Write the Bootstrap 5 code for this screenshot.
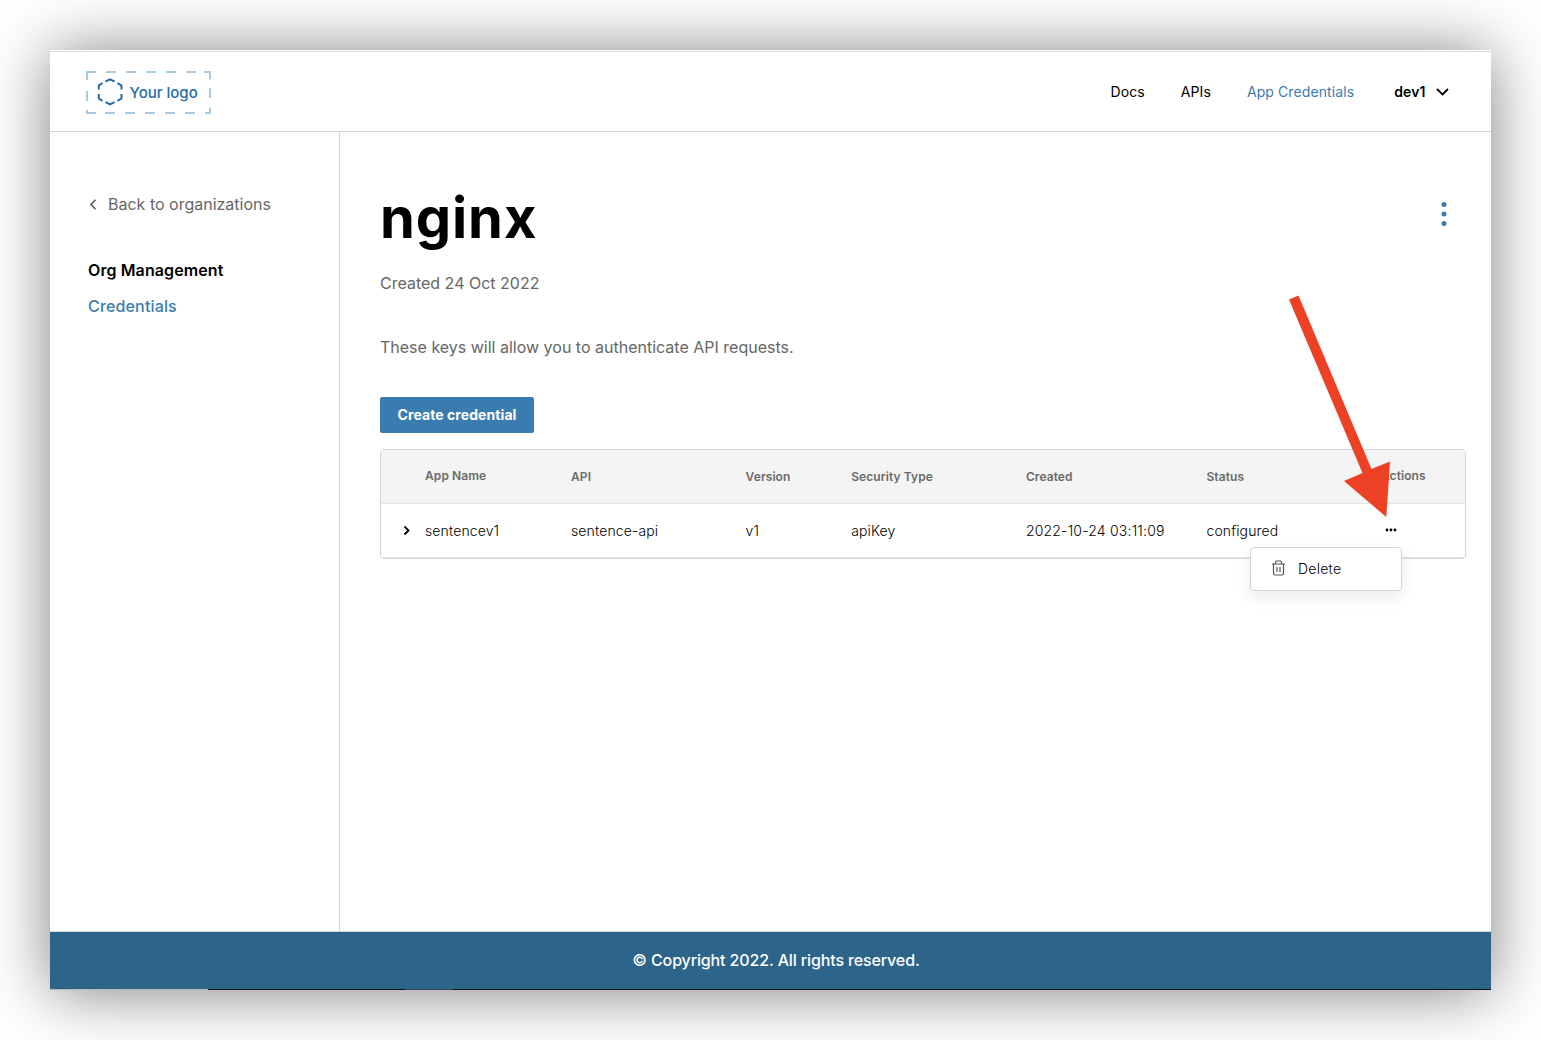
<!DOCTYPE html>
<html lang="en">
<head>
<meta charset="utf-8">
<meta name="viewport" content="width=device-width, initial-scale=1">
<title>nginx - App Credentials</title>
<link href="https://cdn.jsdelivr.net/npm/bootstrap@5.3.0/dist/css/bootstrap.min.css" rel="stylesheet">
<style>
body{font-family:Inter,"Liberation Sans",sans-serif;background:#fff;width:1541px;height:1040px;padding:50px;overflow:hidden;color:#000}
a{text-decoration:none}
svg{display:block;flex:none}
.app-window{width:1441px;height:940px;background:#fff;box-shadow:0 2px 60px rgba(0,0,0,.5);padding-top:1px}
.top-nav{height:81px;border-top:1px solid #dcdcdc;border-bottom:1px solid #d5d5d5;padding:0 41.500px 0 36px;font-size:14px;letter-spacing:.1px}
.top-nav .nav-link{padding:0;color:#000}
.top-nav .nav-link.active{color:#3a7cb0}
.top-links{gap:36px}
.user-caret{margin-left:9px}
.side{width:290px;border-right:1px solid #d5d5d5;padding:60px 0 0 38px;letter-spacing:.16px}
.back-link{color:#666;font-size:16px;font-weight:400;line-height:24px;gap:9px;letter-spacing:0}
.side-title{font-size:16px;font-weight:600;line-height:24px;margin-top:42px;letter-spacing:.1px}
.side-link{font-size:16px;font-weight:500;line-height:24px;color:#3a7cb0;margin-top:12px}
.content-pane{padding:52px 25px 0 40px}
.page-title{font-size:56px;font-weight:700;line-height:68px;margin:0;letter-spacing:.9px}
.grey-line{font-size:16px;font-weight:400;line-height:24px;color:#666;margin:19px 0 0}
.grey-line+.grey-line{margin-top:40px}
.btn-create{--bs-btn-bg:#3a7cb0;--bs-btn-color:#fff;--bs-btn-border-color:#3a7cb0;--bs-btn-border-radius:2px;--bs-btn-font-size:14px;--bs-btn-font-weight:700;--bs-btn-padding-x:0;--bs-btn-padding-y:0;width:154px;height:36px;margin:38px 0 16px;padding-bottom:2px;letter-spacing:.08px;display:block;white-space:nowrap}
.cred-box{border:1px solid #d5d5d5;border-radius:4px;height:110px}
.cred-table{table-layout:fixed;margin:0;border-collapse:separate;border-spacing:0;width:100%;font-size:14px;font-weight:350;color:#000;letter-spacing:.13px}
.cred-table>:not(caption)>*>*{padding:0;border:0;vertical-align:middle}
.cred-table>thead th{height:54px;background:#f4f4f4;color:#6a6a6a;font-size:12px;font-weight:600;border-bottom:1px solid #e4e4e4;letter-spacing:.08px}
.cred-table>thead th:first-child{border-top-left-radius:3px}
.cred-table>thead th:last-child{border-top-right-radius:3px}
.cred-table>tbody td{height:54px;border-bottom:1px solid #e6e6e6}
.cred-table>thead .lift{padding-bottom:2px}
.cred-table .c0{width:44px}.c1{width:146px}.c2{width:174.6px}.c3{width:105.6px}.c4{width:174.7px}.c5{width:180.6px}.c6{width:174.500px}
.row-dots{margin-left:3px}
.row-caret{margin-left:18px}
.stamp{letter-spacing:.2px}
.row-menu{display:block;position:absolute;left:869px;top:97px;width:152px;min-width:0;height:44px;padding:0;border:1px solid #d5d5d5;border-radius:4px;box-shadow:0 6px 16px rgba(40,50,70,.1)}
.row-menu .dropdown-item{padding:0 20px;height:40px;font-size:14px;font-weight:350;color:#000;gap:12px;letter-spacing:.25px}
.foot{height:58px;background:#2d648a;border-top:1px solid #d5d9dd;color:#fff;font-size:16px;font-weight:500;letter-spacing:-.13px;padding:0 0 2px 11px}
.edge-strip{height:1px;background:linear-gradient(90deg,#b4b8c4 158px,#081220 158px 355px,#3b4658 355px 403px,#081220 403px)}
.pointer{position:absolute;left:1280px;top:290px;z-index:1100}
</style>
</head>
<body>
<div class="app-window d-flex flex-column">
  <header class="top-nav d-flex align-items-center justify-content-between">
    <a href="#" aria-label="Your logo">
      <svg width="126" height="44" viewBox="0 0 126 44" fill="none">
        <g stroke="#a9cbe0" stroke-width="2"><path d="M1 10V2h9M20 2h10M40 2h10M60 2h10M80 2h10M100 2h10M118 2h6v7.500M1 21v10M124 18v10M1 40v4M0 43h10M19 43h10M39 43h10M59 43h10M79 43h10M99 43h10M119 43h6M124 44v-6"/></g>
        <g stroke="#2468a5" stroke-width="2"><path d="M19.500 11.500 24 9.300l4.500 2.200M31.500 13.200l4 2.300v4M35.500 24v4.500l-4 2.300M28.500 32.200 24 34.500l-4.500-2.300M16.500 30.800l-3.700-2.300V24M12.800 19.500v-4l3.700-2.300"/></g>
        <text x="43.500" y="28" fill="#246ba8" font-family="Inter" font-size="15" font-weight="500" letter-spacing="0">Your logo</text>
      </svg>
    </a>
    <nav class="nav align-items-center top-links">
      <a class="nav-link" href="#">Docs</a>
      <a class="nav-link" href="#">APIs</a>
      <a class="nav-link active" href="#">App Credentials</a>
      <a class="nav-link d-flex align-items-center fw-semibold ms-1" href="#">dev1
        <svg class="user-caret" width="15" height="14" viewBox="0 0 15 14" fill="none" stroke="#000" stroke-width="1.800"><path d="m2 4 5.500 5.500L13 4"/></svg></a>
    </nav>
  </header>
  <div class="d-flex flex-grow-1">
    <aside class="side flex-shrink-0">
      <a href="#" class="back-link d-flex align-items-center"><svg width="11" height="14" viewBox="0 0 11 14" fill="none" stroke="#555" stroke-width="1.500"><path d="M7.500 2.800 3 7.500l4.500 4.700"/></svg>Back to organizations</a>
      <div class="side-title">Org Management</div>
      <a href="#" class="side-link d-block">Credentials</a>
    </aside>
    <main class="content-pane flex-grow-1">
      <div class="d-flex justify-content-between">
        <h1 class="page-title">nginx</h1>
        <svg class="mt-3" width="44" height="30" viewBox="0 0 44 30" fill="#3a7cb0"><circle cx="22" cy="4.500" r="2.500"/><circle cx="22" cy="14" r="2.500"/><circle cx="22" cy="23.500" r="2.500"/></svg>
      </div>
      <p class="grey-line">Created 24 Oct 2022</p>
      <p class="grey-line">These keys will allow you to authenticate API requests.</p>
      <button class="btn btn-create">Create credential</button>
      <div class="cred-box position-relative">
        <table class="table cred-table">
          <colgroup><col class="c0"><col class="c1"><col class="c2"><col class="c3"><col class="c4"><col class="c5"><col class="c6"><col></colgroup>
          <thead><tr><th></th><th class="lift">App Name</th><th>API</th><th>Version</th><th>Security Type</th><th>Created</th><th>Status</th><th class="lift">Actions</th></tr></thead>
          <tbody><tr>
            <td><svg class="row-caret" width="14" height="14" viewBox="0 0 14 14" fill="none" stroke="#000" stroke-width="1.800"><path d="m5.500 2.500 4 4-4 4"/></svg></td>
            <td>sentencev1</td><td>sentence-api</td><td>v1</td><td>apiKey</td><td class="stamp">2022-10-24 03:11:09</td>
            <td>configured</td>
            <td><svg class="row-dots" width="14" height="6" viewBox="0 0 14 6"><circle cx="3" cy="2" r="1.400"/><circle cx="7" cy="2" r="1.400"/><circle cx="11" cy="2" r="1.400"/></svg></td>
          </tr></tbody>
        </table>
        <div class="dropdown-menu row-menu">
          <a class="dropdown-item d-flex align-items-center" href="#"><svg width="15" height="16" viewBox="0 0 15 16" fill="none" stroke="#555" stroke-width="1.200"><path d="M1 4h13M4.500 4V2.200Q4.500 1 5.700 1h3.600q1.200 0 1.200 1.200V4M2.500 4v9.500q0 1.500 1.500 1.500h7q1.500 0 1.500-1.500V4M6 7v5M9 7v5"/></svg>Delete</a>
        </div>
      </div>
    </main>
  </div>
  <footer class="foot d-flex align-items-center justify-content-center">© Copyright 2022. All rights reserved.</footer>
  <div class="edge-strip"></div>
</div>
<svg class="pointer" width="130" height="240" viewBox="1280 290 130 240"><path d="M1289 299.500 1298.500 295.500 1371.500 469 1390 461.500 1386.300 517 1344 481 1362.500 473Z" fill="#ec4125"/></svg>
<script src="https://cdn.jsdelivr.net/npm/bootstrap@5.3.0/dist/js/bootstrap.bundle.min.js"></script>
</body>
</html>
